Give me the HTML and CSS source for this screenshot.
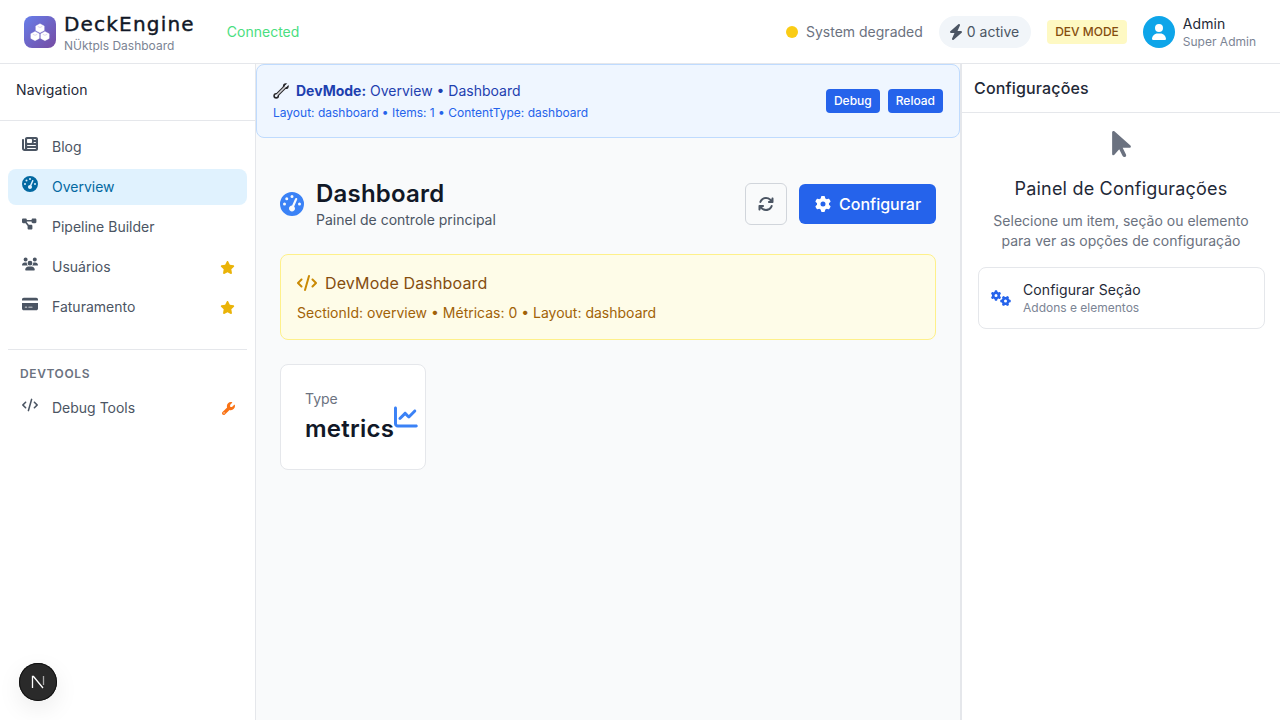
FILE: index.html
```html
<!DOCTYPE html>
<html lang="en">
  <head>
    <meta charset="UTF-8" />
    <meta name="viewport" content="width=device-width, initial-scale=1.0" />
    <title>DeckEngine Dashboard</title>
    <link rel="stylesheet" href="styles.css">
  </head>
  <body>
    <header class="topbar">
      <div class="brand">
        <div class="brand-logo">
          <svg viewBox="0 0 24 20" width="22" height="18">
            <path class="cube" d="M12 .8l4.700 2.500v5.100L12 10.900 7.300 8.400V3.300z" />
            <path class="cube" d="M6.500 9.500l4.700 2.500v5.100l-4.700 2.500-4.700-2.500V12z" />
            <path class="cube" d="M17.500 9.500l4.700 2.500v5.100l-4.700 2.500-4.700-2.500V12z" />
            <path class="cube-line" d="M9.500 3.800L12 5l2.500-1.200M4 12.500l2.500 1.200L9 12.500M15 12.500l2.500 1.200 2.500-1.200" />
          </svg>
        </div>
        <div class="brand-text">
          <div class="brand-name">DeckEngine</div>
          <div class="brand-sub">NÜktpls Dashboard</div>
        </div>
      </div>
      <span class="connected">Connected</span>
      <div class="topbar-right">
        <div class="status"><span class="status-dot"></span>System degraded</div>
        <div class="active-pill">
          <svg class="ico-bolt" viewBox="0 0 448 512"><path d="M349.400 44.600c5.900-13.700 1.500-29.700-10.600-38.500s-28.600-8-39.900 1.800l-256 224c-10 8.800-13.600 22.900-8.900 35.300S50.700 288 64 288H175.500L98.600 467.400c-5.900 13.700-1.500 29.700 10.600 38.500s28.600 8 39.900-1.800l256-224c10-8.800 13.600-22.900 8.900-35.300s-16.600-20.700-30-20.700H272.500L349.400 44.600z" /></svg>
          0 active
        </div>
        <div class="dev-badge">DEV MODE</div>
        <div class="user">
          <div class="avatar">
            <svg viewBox="0 0 448 512" width="14" height="16"><path d="M224 256A128 128 0 1 0 224 0a128 128 0 1 0 0 256zm-45.700 48C79.800 304 0 383.800 0 482.300C0 498.700 13.300 512 29.700 512H418.300c16.400 0 29.700-13.300 29.700-29.700C448 383.800 368.200 304 269.700 304H178.300z" /></svg>
          </div>
          <div class="user-text">
            <div class="user-name">Admin</div>
            <div class="user-role">Super Admin</div>
          </div>
        </div>
      </div>
    </header>

    <div class="layout">
      <aside class="sidebar">
        <div class="sidebar-title">Navigation</div>
        <nav class="nav">
          <a class="nav-item">
            <svg class="nav-icon" viewBox="0 0 512 512"><path d="M96 96c0-35.300 28.700-64 64-64H448c35.300 0 64 28.700 64 64V416c0 35.300-28.700 64-64 64H80c-44.200 0-80-35.800-80-80V128c0-17.700 14.300-32 32-32s32 14.300 32 32V400c0 8.800 7.200 16 16 16s16-7.200 16-16V96zm64 24v80c0 13.300 10.700 24 24 24H296c13.300 0 24-10.700 24-24V120c0-13.300-10.700-24-24-24H184c-13.300 0-24 10.700-24 24zm208-8c0 8.800 7.200 16 16 16h48c8.800 0 16-7.200 16-16s-7.200-16-16-16H384c-8.800 0-16 7.200-16 16zm0 96c0 8.800 7.200 16 16 16h48c8.800 0 16-7.200 16-16s-7.200-16-16-16H384c-8.800 0-16 7.200-16 16zM160 304c0 8.800 7.200 16 16 16H432c8.800 0 16-7.200 16-16s-7.200-16-16-16H176c-8.800 0-16 7.200-16 16zm0 96c0 8.800 7.200 16 16 16H432c8.800 0 16-7.200 16-16s-7.200-16-16-16H176c-8.800 0-16 7.200-16 16z" /></svg>
            Blog
          </a>
          <a class="nav-item active">
            <svg class="nav-icon" viewBox="0 0 512 512"><path d="M0 256a256 256 0 1 1 512 0A256 256 0 1 1 0 256zM288 96a32 32 0 1 0-64 0 32 32 0 1 0 64 0zM256 416c35.300 0 64-28.700 64-64c0-17.400-6.900-33.100-18.100-44.600L366 161.700c5.300-12.100-.2-26.300-12.300-31.600s-26.300.2-31.600 12.300L257.900 288c-.6 0-1.300 0-1.900 0c-35.300 0-64 28.700-64 64s28.700 64 64 64zM176 144a32 32 0 1 0-64 0 32 32 0 1 0 64 0zM96 288a32 32 0 1 0 0-64 32 32 0 1 0 0 64zm352-32a32 32 0 1 0-64 0 32 32 0 1 0 64 0z" /></svg>
            Overview
          </a>
          <a class="nav-item">
            <svg class="nav-icon" viewBox="0 0 640 512"><path d="M0 80C0 53.500 21.500 32 48 32h96c26.500 0 48 21.500 48 48V96H384V80c0-26.500 21.500-48 48-48h96c26.500 0 48 21.500 48 48v96c0 26.500-21.500 48-48 48H432c-26.500 0-48-21.500-48-48V160H192v16c0 1.700-.1 3.400-.3 5L272 288h96c26.500 0 48 21.500 48 48v96c0 26.500-21.500 48-48 48H272c-26.500 0-48-21.500-48-48V336c0-1.700.1-3.400.3-5L144 224H48c-26.500 0-48-21.500-48-48V80z" /></svg>
            Pipeline Builder
          </a>
          <a class="nav-item">
            <svg class="nav-icon" viewBox="0 0 640 512"><path d="M144 0a80 80 0 1 1 0 160A80 80 0 1 1 144 0zM512 0a80 80 0 1 1 0 160A80 80 0 1 1 512 0zM0 298.700C0 239.800 47.800 192 106.700 192h42.700c15.900 0 31 3.500 44.600 9.700c-1.300 7.200-1.900 14.700-1.900 22.300c0 38.200 16.800 72.500 43.300 96c-.2 0-.4 0-.7 0H21.300C9.600 320 0 310.400 0 298.700zM405.300 320c-.2 0-.4 0-.7 0c26.600-23.500 43.300-57.800 43.300-96c0-7.600-.7-15-1.900-22.300c13.600-6.300 28.700-9.700 44.600-9.700h42.700C592.200 192 640 239.800 640 298.700c0 11.800-9.600 21.300-21.300 21.300H405.300zM224 224a96 96 0 1 1 192 0 96 96 0 1 1-192 0zM128 485.300C128 411.700 187.700 352 261.300 352H378.700C452.300 352 512 411.700 512 485.300c0 14.700-11.900 26.700-26.700 26.700H154.700c-14.700 0-26.700-11.900-26.700-26.700z" /></svg>
            Usuários
            <svg class="nav-star" viewBox="0 0 576 512"><path d="M316.900 18C311.600 7 300.400 0 288.100 0s-23.400 7-28.800 18L195 150.300 51.400 171.500c-12 1.800-22 10.200-25.700 21.700s-.7 24.200 7.900 32.700L137.800 329 113.200 474.700c-2 12 3 24.200 12.900 31.300s23 8 33.800 2.300l128.300-68.500 128.300 68.500c10.800 5.700 23.900 4.900 33.800-2.300s14.900-19.300 12.900-31.300L438.500 329 542.700 225.900c8.600-8.500 11.700-21.200 7.900-32.700s-13.700-19.900-25.700-21.700L381.200 150.300 316.900 18z" /></svg>
          </a>
          <a class="nav-item">
            <svg class="nav-icon" viewBox="0 0 576 512"><path d="M64 32C28.700 32 0 60.700 0 96v32H576V96c0-35.300-28.700-64-64-64H64zM576 224H0V416c0 35.300 28.700 64 64 64H512c35.300 0 64-28.700 64-64V224zM112 352h64c8.800 0 16 7.200 16 16s-7.200 16-16 16H112c-8.800 0-16-7.200-16-16s7.200-16 16-16zm112 16c0-8.800 7.200-16 16-16H368c8.800 0 16 7.200 16 16s-7.200 16-16 16H240c-8.800 0-16-7.200-16-16z" /></svg>
            Faturamento
            <svg class="nav-star" viewBox="0 0 576 512"><path d="M316.900 18C311.600 7 300.400 0 288.100 0s-23.400 7-28.800 18L195 150.300 51.400 171.500c-12 1.800-22 10.200-25.700 21.700s-.7 24.200 7.900 32.700L137.800 329 113.200 474.700c-2 12 3 24.200 12.900 31.300s23 8 33.800 2.300l128.300-68.500 128.300 68.500c10.800 5.700 23.900 4.900 33.800-2.300s14.900-19.300 12.900-31.300L438.500 329 542.700 225.900c8.600-8.500 11.700-21.200 7.900-32.700s-13.700-19.900-25.700-21.700L381.200 150.300 316.900 18z" /></svg>
          </a>
        </nav>
        <div class="nav-section">
          <div class="nav-section-title">DEVTOOLS</div>
          <a class="nav-item">
            <svg class="nav-icon" viewBox="0 0 640 512"><path d="M392.800 1.200c-17-4.900-34.700 5-39.600 22l-128 448c-4.900 17 5 34.700 22 39.600s34.700-5 39.600-22l128-448c4.900-17-5-34.700-22-39.600zm80.600 120.100c-12.500 12.500-12.500 32.800 0 45.300L562.700 256l-89.400 89.400c-12.500 12.500-12.500 32.800 0 45.300s32.800 12.500 45.300 0l112-112c12.500-12.500 12.500-32.800 0-45.300l-112-112c-12.500-12.500-32.800-12.500-45.300 0zm-306.700 0c-12.500-12.500-32.800-12.500-45.300 0l-112 112c-12.500 12.500-12.500 32.800 0 45.300l112 112c12.500 12.500 32.800 12.500 45.300 0s12.500-32.800 0-45.300L77.300 256l89.400-89.400c12.500-12.500 12.500-32.800 0-45.300z" /></svg>
            Debug Tools
            <svg class="nav-wrench" viewBox="0 0 512 512"><path d="M352 320c88.400 0 160-71.600 160-160c0-15.300-2.200-30.100-6.200-44.200c-3.100-10.800-16.400-13.200-24.300-5.300l-76.800 76.800c-3 3-7.100 4.700-11.300 4.700H336c-8.800 0-16-7.200-16-16V118.600c0-4.200 1.700-8.300 4.700-11.300l76.800-76.800c7.900-7.900 5.400-21.200-5.300-24.300C382.100 2.200 367.300 0 352 0C263.600 0 192 71.600 192 160c0 19.100 3.400 37.500 9.500 54.500L19.900 396.100C7.200 408.800 0 426.100 0 444.100C0 481.600 30.400 512 67.900 512c18 0 35.300-7.200 48-19.900L297.500 310.500c17 6.200 35.400 9.500 54.500 9.500zM80 408a24 24 0 1 1 0 48 24 24 0 1 1 0-48z" /></svg>
          </a>
        </div>
      </aside>

      <main class="main">
        <div class="dev-banner">
          <div>
            <div class="dev-banner-title">
              <svg viewBox="0 0 16 16" width="16" height="16">
                <path class="wrench-outer" d="M3.200 12.800l9.600-9.600" />
                <circle class="wrench-end" cx="3.200" cy="12.800" r="2.900" />
                <circle class="wrench-end" cx="12.800" cy="3.200" r="2.900" />
                <path class="wrench-inner" d="M3.200 12.800l9.600-9.600" />
                <circle class="wrench-hole" cx="3.200" cy="12.800" r="1.300" />
                <path class="wrench-jaw" d="M13 3l2.700-2.700" />
              </svg>
              <span><strong>DevMode:</strong> Overview • Dashboard</span>
            </div>
            <div class="dev-banner-sub">Layout: dashboard • Items: 1 • ContentType: dashboard</div>
          </div>
          <div class="dev-banner-actions">
            <button class="mini-btn">Debug</button>
            <button class="mini-btn">Reload</button>
          </div>
        </div>

        <div class="content">
          <div class="page-head">
            <svg class="page-icon" viewBox="0 0 512 512"><path d="M0 256a256 256 0 1 1 512 0A256 256 0 1 1 0 256zM288 96a32 32 0 1 0-64 0 32 32 0 1 0 64 0zM256 416c35.300 0 64-28.700 64-64c0-17.400-6.900-33.100-18.100-44.600L366 161.700c5.300-12.100-.2-26.300-12.300-31.600s-26.300.2-31.600 12.300L257.900 288c-.6 0-1.300 0-1.900 0c-35.300 0-64 28.700-64 64s28.700 64 64 64zM176 144a32 32 0 1 0-64 0 32 32 0 1 0 64 0zM96 288a32 32 0 1 0 0-64 32 32 0 1 0 0 64zm352-32a32 32 0 1 0-64 0 32 32 0 1 0 64 0z" /></svg>
            <div class="page-title-wrap">
              <h1>Dashboard</h1>
              <p>Painel de controle principal</p>
            </div>
            <button class="refresh-btn">
              <svg viewBox="0 0 512 512" width="16" height="16"><path d="M105.100 202.600c7.700-21.800 20.200-42.300 37.800-59.800c62.500-62.500 163.800-62.500 226.300 0L386.300 160H352c-17.700 0-32 14.300-32 32s14.300 32 32 32H463.500c0 0 0 0 0 0h.4c17.700 0 32-14.300 32-32V80c0-17.700-14.300-32-32-32s-32 14.300-32 32v35.200L414.400 97.600c-87.500-87.500-229.300-87.500-316.800 0C73.200 122 55.600 150.700 44.800 181.400c-5.900 16.700 2.900 34.900 19.500 40.800s34.900-2.900 40.800-19.500zM39 289.300c-5 1.500-9.800 4.200-13.700 8.200c-4 4-6.700 8.800-8.100 14c-.3 1.200-.6 2.500-.8 3.800c-.3 1.700-.4 3.400-.4 5.100V432c0 17.700 14.300 32 32 32s32-14.300 32-32V396.900l17.600 17.500 0 0c87.500 87.400 229.300 87.400 316.700 0c24.400-24.400 42.100-53.100 52.900-83.700c5.900-16.700-2.900-34.900-19.500-40.800s-34.900 2.900-40.800 19.500c-7.700 21.800-20.200 42.300-37.800 59.800c-62.500 62.500-163.800 62.500-226.300 0l-.1-.1L125.600 352H160c17.700 0 32-14.300 32-32s-14.300-32-32-32H48.400c-1.600 0-3.200.1-4.800.3s-3.100.5-4.600 1z" /></svg>
            </button>
            <button class="primary-btn">
              <svg viewBox="0 0 512 512" width="16" height="16"><path d="M495.900 166.600c3.200 8.700.5 18.400-6.400 24.600l-43.300 39.400c1.100 8.300 1.700 16.800 1.700 25.400s-.6 17.100-1.700 25.400l43.300 39.400c6.900 6.200 9.600 15.900 6.400 24.600c-4.400 11.900-9.700 23.300-15.800 34.300l-4.700 8.100c-6.600 11-14 21.400-22.100 31.200c-5.900 7.200-15.700 9.600-24.500 6.800l-55.700-17.700c-13.400 10.300-28.200 18.900-44 25.400l-12.500 57.100c-2 9.100-9 16.300-18.200 17.800c-13.800 2.300-28 3.500-42.500 3.500s-28.700-1.200-42.500-3.500c-9.200-1.500-16.200-8.700-18.200-17.800l-12.500-57.100c-15.800-6.500-30.600-15.100-44-25.400L83.100 425.900c-8.800 2.800-18.600.3-24.500-6.800c-8.100-9.800-15.500-20.200-22.100-31.200l-4.700-8.100c-6.100-11-11.400-22.400-15.800-34.300c-3.200-8.700-.5-18.400 6.400-24.600l43.300-39.400C64.600 273.100 64 264.600 64 256s.6-17.100 1.700-25.400L22.400 191.200c-6.900-6.200-9.600-15.900-6.400-24.600c4.400-11.900 9.700-23.300 15.800-34.300l4.700-8.100c6.600-11 14-21.400 22.100-31.200c5.900-7.200 15.700-9.600 24.500-6.800l55.700 17.700c13.400-10.300 28.200-18.900 44-25.400l12.500-57.100c2-9.100 9-16.300 18.200-17.800C227.300 1.200 241.500 0 256 0s28.700 1.200 42.500 3.500c9.200 1.500 16.200 8.700 18.200 17.800l12.500 57.100c15.800 6.500 30.600 15.100 44 25.400l55.700-17.700c8.800-2.800 18.600-.3 24.500 6.800c8.100 9.800 15.500 20.200 22.100 31.200l4.700 8.100c6.100 11 11.400 22.400 15.800 34.300zM256 336a80 80 0 1 0 0-160 80 80 0 1 0 0 160z" /></svg>
              Configurar
            </button>
          </div>

          <div class="callout">
            <div class="callout-title">
              <svg viewBox="0 0 640 512" width="20" height="16"><path d="M392.800 1.200c-17-4.900-34.700 5-39.600 22l-128 448c-4.900 17 5 34.700 22 39.600s34.700-5 39.600-22l128-448c4.900-17-5-34.700-22-39.600zm80.600 120.100c-12.500 12.500-12.500 32.800 0 45.300L562.700 256l-89.400 89.400c-12.500 12.500-12.500 32.800 0 45.300s32.800 12.500 45.300 0l112-112c12.500-12.500 12.500-32.800 0-45.300l-112-112c-12.500-12.500-32.800-12.500-45.300 0zm-306.700 0c-12.500-12.500-32.800-12.500-45.300 0l-112 112c-12.500 12.500-12.500 32.800 0 45.300l112 112c12.500 12.500 32.800 12.500 45.300 0s12.500-32.800 0-45.300L77.300 256l89.400-89.400c12.500-12.500 12.500-32.800 0-45.300z" /></svg>
              DevMode Dashboard
            </div>
            <div class="callout-sub">SectionId: overview • Métricas: 0 • Layout: dashboard</div>
          </div>

          <div class="metric-card">
            <div>
              <div class="metric-label">Type</div>
              <div class="metric-value">metrics</div>
            </div>
            <svg class="metric-icon" viewBox="0 0 512 512"><path d="M64 64c0-17.700-14.300-32-32-32S0 46.300 0 64V400c0 44.200 35.800 80 80 80H480c17.700 0 32-14.300 32-32s-14.300-32-32-32H80c-8.800 0-16-7.200-16-16V64zm406.600 86.600c12.500-12.500 12.500-32.800 0-45.300s-32.800-12.500-45.300 0L320 210.700l-57.400-57.400c-12.500-12.500-32.800-12.500-45.300 0l-112 112c-12.500 12.500-12.500 32.800 0 45.300s32.800 12.500 45.300 0L240 221.300l57.400 57.400c12.500 12.500 32.800 12.500 45.300 0l128-128z" /></svg>
          </div>
        </div>
      </main>

      <aside class="config">
        <div class="config-head">Configurações</div>
        <div class="config-body">
          <svg class="config-cursor" viewBox="0 0 320 512"><path d="M0 55.200V426c0 12.200 9.900 22 22 22c6.300 0 12.400-2.700 16.600-7.500L121.200 346l58.100 116.300c7.900 15.800 27.100 22.200 42.900 14.300s22.200-27.100 14.300-42.900L179.800 320H297.900c12.200 0 22.100-9.900 22.100-22.100c0-6.300-2.700-12.300-7.400-16.500L38.600 37.900C34.300 34.100 28.900 32 23.200 32C10.400 32 0 42.400 0 55.200z" /></svg>
          <h3>Painel de Configurações</h3>
          <p>Selecione um item, seção ou elemento<br>para ver as opções de configuração</p>
          <div class="config-card">
            <svg viewBox="0 0 640 512" width="20" height="16"><path d="M308.500 135.300c7.100-6.300 9.900-16.200 6.200-25c-2.300-5.300-4.800-10.500-7.600-15.500L304 89.400c-3-5-6.300-9.900-9.800-14.600c-5.700-7.600-15.700-10.100-24.700-7.100l-28.200 9.300c-10.700-8.800-23-16-36.200-20.900L199 27.100c-1.900-9.300-9.100-16.700-18.500-17.800C173.900 8.400 167.200 8 160.400 8h-.7c-6.800 0-13.500.4-20.100 1.200c-9.400 1.100-16.600 8.600-18.500 17.800L115 56.100c-13.300 5-25.500 12.100-36.200 20.900L50.500 67.800c-9-3-19-.5-24.700 7.100c-3.500 4.700-6.800 9.600-9.900 14.600l-3 5.300c-2.800 5-5.300 10.200-7.600 15.600c-3.700 8.700-.9 18.600 6.200 25l22.200 19.800C32.600 161.900 32 168.900 32 176s.6 14.100 1.700 20.900L11.500 216.700c-7.100 6.300-9.900 16.200-6.200 25c2.300 5.300 4.800 10.500 7.600 15.600l3 5.200c3 5.100 6.300 9.900 9.900 14.600c5.700 7.600 15.700 10.100 24.700 7.100l28.200-9.300c10.700 8.800 23 16 36.200 20.900l6.100 29.100c1.900 9.300 9.100 16.700 18.500 17.800c6.700.8 13.500 1.200 20.400 1.200s13.700-.4 20.400-1.200c9.400-1.100 16.600-8.600 18.500-17.800l6.100-29.100c13.300-5 25.500-12.100 36.200-20.900l28.200 9.300c9 3 19 .5 24.700-7.100c3.500-4.700 6.800-9.500 9.800-14.600l3.100-5.400c2.800-5 5.300-10.200 7.600-15.500c3.700-8.700.9-18.600-6.200-25l-22.200-19.800c1.100-6.800 1.700-13.800 1.700-20.900s-.6-14.100-1.700-20.900l22.200-19.800zM112 176a48 48 0 1 1 96 0 48 48 0 1 1-96 0zM504.700 500.500c6.300 7.100 16.200 9.900 25 6.200c5.300-2.300 10.500-4.800 15.500-7.600l5.400-3.100c5-3 9.900-6.300 14.600-9.800c7.600-5.700 10.100-15.700 7.100-24.700l-9.300-28.200c8.800-10.700 16-23 20.900-36.200l29.100-6.100c9.300-1.900 16.700-9.100 17.800-18.500c.8-6.700 1.200-13.500 1.200-20.400s-.4-13.700-1.200-20.400c-1.100-9.400-8.600-16.600-17.800-18.500L583.900 307c-5-13.300-12.100-25.500-20.900-36.200l9.300-28.200c3-9 .5-19-7.100-24.700c-4.700-3.500-9.600-6.800-14.600-9.900l-5.300-3c-5-2.800-10.200-5.300-15.600-7.600c-8.700-3.700-18.600-.9-25 6.200l-19.800 22.200c-6.800-1.100-13.800-1.700-20.900-1.700s-14.100.6-20.900 1.700l-19.800-22.200c-6.300-7.100-16.200-9.900-25-6.200c-5.300 2.300-10.500 4.800-15.600 7.600l-5.200 3c-5.100 3-9.900 6.300-14.600 9.900c-7.600 5.700-10.100 15.700-7.100 24.700l9.300 28.200c-8.800 10.700-16 23-20.900 36.200L315.100 313c-9.300 1.900-16.700 9.100-17.800 18.500c-.8 6.700-1.200 13.500-1.200 20.400s.4 13.700 1.200 20.400c1.100 9.400 8.600 16.600 17.800 18.500l29.100 6.100c5 13.300 12.100 25.500 20.900 36.200l-9.300 28.200c-3 9-.5 19 7.100 24.700c4.700 3.500 9.500 6.800 14.600 9.800l5.400 3.100c5 2.800 10.200 5.300 15.500 7.600c8.700 3.700 18.600.9 25-6.200l19.800-22.200c6.800 1.100 13.800 1.700 20.900 1.700s14.100-.6 20.900-1.700l19.800 22.200zM464 304a48 48 0 1 1 0 96 48 48 0 1 1 0-96z" /></svg>
            <div>
              <div class="config-card-title">Configurar Seção</div>
              <div class="config-card-sub">Addons e elementos</div>
            </div>
          </div>
        </div>
      </aside>
    </div>

    <button class="next-badge">
      <svg viewBox="0 0 16 16" width="16" height="16">
        <path class="next-n" d="M2.500 14V2.500h1L13 14" />
        <path class="next-n next-n-faded" d="M13.500 2v9" />
      </svg>
    </button>
  </body>
</html>
```

FILE: styles.css
```css
* {
  box-sizing: border-box;
}

body {
  font-family: "Inter", "Liberation Sans", sans-serif;
  background-color: #ffffff;
  color: #111827;
  margin: 0;
  height: 100vh;
  display: flex;
  flex-direction: column;
  overflow: hidden;
}

button {
  font-family: inherit;
  border: none;
  cursor: pointer;
}

h1,
h3,
p {
  margin: 0;
}

/* top bar */
.topbar {
  height: 64px;
  flex-shrink: 0;
  display: flex;
  align-items: center;
  padding: 0 24px;
  background-color: #ffffff;
  border-bottom: 1px solid #e5e7eb;
}

.brand {
  display: flex;
  align-items: center;
  gap: 8px;
}

.brand-logo {
  width: 32px;
  height: 32px;
  border-radius: 8px;
  background: linear-gradient(135deg, #667eea, #764ba2);
  display: flex;
  align-items: center;
  justify-content: center;
}

.cube {
  fill: #ffffff;
  stroke: #ffffff;
  stroke-width: 0.4;
  stroke-linejoin: round;
}

.cube-line {
  fill: none;
  stroke: #c9bde0;
  stroke-width: 0.7;
}

.brand-text {
  padding-top: 2px;
}

.brand-name {
  font-family: "DejaVu Sans", sans-serif;
  font-size: 20px;
  line-height: 24px;
  letter-spacing: 1.2px;
  color: #111827;
  -webkit-text-stroke: 0.4px #111827;
}

.brand-sub {
  margin-top: 2px;
  font-size: 12px;
  line-height: 16px;
  color: #7b8494;
}

.connected {
  margin-left: 32px;
  font-size: 14px;
  color: #4ade80;
}

.topbar-right {
  margin-left: auto;
  display: flex;
  align-items: center;
  gap: 16px;
}

.status {
  display: flex;
  align-items: center;
  gap: 8px;
  font-size: 14px;
  color: #6b7280;
}

.status-dot {
  width: 12px;
  height: 12px;
  border-radius: 50%;
  background-color: #facc15;
}

.active-pill {
  height: 32px;
  padding: 0 12px;
  display: flex;
  align-items: center;
  gap: 4px;
  border-radius: 16px;
  background-color: #f1f5f9;
  font-size: 14px;
  color: #4b5563;
}

.ico-bolt {
  width: 14px;
  height: 16px;
  margin-left: -2px;
  fill: #4b5563;
}

.dev-badge {
  padding: 4px 8px;
  border-radius: 4px;
  background-color: #fef9c3;
  color: #854d0e;
  font-size: 12px;
  font-weight: 500;
  line-height: 16px;
}

.user {
  display: flex;
  align-items: center;
  gap: 8px;
}

.avatar {
  width: 32px;
  height: 32px;
  border-radius: 50%;
  background-color: #0ea5e9;
  display: flex;
  align-items: center;
  justify-content: center;
  fill: #ffffff;
}

.user-text {
  padding-top: 2px;
}

.user-name {
  font-size: 14px;
  line-height: 18px;
  letter-spacing: 0.1px;
  color: #1f2937;
}

.user-role {
  margin-top: 1px;
  font-size: 12px;
  line-height: 16px;
  color: #7b8494;
}

/* page columns */
.layout {
  flex: 1;
  display: flex;
  min-height: 0;
}

.sidebar {
  width: 256px;
  flex-shrink: 0;
  background-color: #ffffff;
  border-right: 1px solid #e5e7eb;
}

.sidebar-title {
  height: 57px;
  padding: 0 16px 6px;
  display: flex;
  align-items: center;
  border-bottom: 1px solid #e5e7eb;
  font-size: 14px;
  letter-spacing: 0.1px;
  color: #1f2937;
}

.nav {
  padding: 8px 8px 24px;
  display: flex;
  flex-direction: column;
  gap: 4px;
}

.nav-item {
  height: 36px;
  padding: 0 12px 2px 14px;
  display: flex;
  align-items: center;
  border-radius: 8px;
  font-size: 14px;
  color: #4b5563;
}

.nav-item.active {
  background-color: #e0f2fe;
  color: #0369a1;
}

.nav-icon {
  width: 16px;
  height: 16px;
  margin-right: 14px;
  margin-top: -5px;
  fill: currentColor;
}

.nav-star {
  width: 15px;
  height: 13px;
  margin-left: auto;
  margin-top: 2px;
  fill: #eab308;
}

.nav-wrench {
  width: 13px;
  height: 13px;
  margin-left: auto;
  margin-top: 2px;
  fill: #f97316;
}

.nav-section {
  margin: 0 8px;
  padding-top: 16px;
  border-top: 1px solid #e5e7eb;
}

.nav-section-title {
  padding: 0 12px;
  font-size: 12px;
  font-weight: 600;
  line-height: 16px;
  letter-spacing: 0.6px;
  color: #6b7280;
}

.nav-section .nav-item {
  margin-top: 8px;
}

/* main column */
.main {
  flex: 1;
  min-width: 0;
  background-color: #f9fafb;
}

.dev-banner {
  height: 74px;
  padding: 0 16px;
  display: flex;
  align-items: center;
  justify-content: space-between;
  background-color: #eff6ff;
  border: 1px solid #bfdbfe;
  border-radius: 8px;
}

.dev-banner-title {
  display: flex;
  align-items: center;
  gap: 7px;
  font-size: 14px;
  line-height: 20px;
  color: #1e40af;
}

.wrench-outer,
.wrench-inner,
.wrench-jaw {
  fill: none;
  stroke-linecap: round;
}

.wrench-outer {
  stroke: #27272a;
  stroke-width: 3.600;
}

.wrench-end {
  fill: #27272a;
}

.wrench-inner {
  stroke: #d4d4d8;
  stroke-width: 1.600;
}

.wrench-hole {
  fill: #eff6ff;
}

.wrench-jaw {
  stroke: #eff6ff;
  stroke-width: 2;
}

.dev-banner-sub {
  margin-top: 4px;
  font-size: 12px;
  line-height: 16px;
  color: #2563eb;
}

.dev-banner-actions {
  display: flex;
  gap: 8px;
}

.mini-btn {
  height: 24px;
  padding: 0 8px 2px;
  border-radius: 4px;
  background-color: #2563eb;
  color: #ffffff;
  font-size: 12px;
  font-weight: 500;
}

.content {
  padding: 40px 24px 24px;
}

.page-head {
  display: flex;
  align-items: center;
  margin-bottom: 24px;
}

.page-icon {
  width: 24px;
  height: 24px;
  margin-right: 12px;
  fill: #3b82f6;
}

.page-title-wrap {
  flex: 1;
}

.page-title-wrap h1 {
  font-size: 24px;
  font-weight: 600;
  line-height: 32px;
  letter-spacing: 0.2px;
  color: #111827;
}

.page-title-wrap p {
  font-size: 14px;
  line-height: 20px;
  color: #4b5563;
}

.refresh-btn {
  width: 42px;
  height: 42px;
  margin-right: 12px;
  display: flex;
  align-items: center;
  justify-content: center;
  background-color: #f9fafb;
  border: 1px solid #d1d5db;
  border-radius: 6px;
  fill: #4b5563;
}

.primary-btn {
  width: 137px;
  height: 40px;
  padding: 0 0 0 16px;
  display: flex;
  align-items: center;
  gap: 8px;
  background-color: #2563eb;
  border-radius: 6px;
  color: #ffffff;
  font-size: 16px;
  font-weight: 500;
  fill: #ffffff;
}

.callout {
  padding: 16px;
  background-color: #fefce8;
  border: 1px solid #fef08a;
  border-radius: 8px;
  margin-bottom: 24px;
}

.callout-title {
  display: flex;
  align-items: center;
  gap: 8px;
  font-size: 16px;
  line-height: 24px;
  letter-spacing: 0.15px;
  color: #854d0e;
  fill: #ca8a04;
}

.callout-sub {
  margin-top: 8px;
  font-size: 14px;
  line-height: 20px;
  color: #a16207;
}

.metric-card {
  width: 146px;
  height: 106px;
  padding: 24px 7px 0 24px;
  display: flex;
  justify-content: space-between;
  align-items: flex-start;
  background-color: #ffffff;
  border: 1px solid #e5e7eb;
  border-radius: 8px;
}

.metric-label {
  font-size: 14px;
  line-height: 20px;
  color: #6b7280;
}

.metric-value {
  margin-top: 4px;
  font-size: 24px;
  font-weight: 600;
  line-height: 32px;
  letter-spacing: 0.25px;
  color: #111827;
}

.metric-icon {
  width: 24px;
  height: 24px;
  margin-top: 16px;
  fill: #3b82f6;
}

/* right panel */
.config {
  width: 320px;
  flex-shrink: 0;
  background-color: #ffffff;
  border-left: 2px solid #e5e7eb;
}

.config-head {
  height: 49px;
  padding: 0 12px;
  display: flex;
  align-items: center;
  border-bottom: 1px solid #e5e7eb;
  font-size: 16px;
  font-weight: 500;
  letter-spacing: 0.15px;
  color: #1f2937;
}

.config-body {
  padding: 16px;
  text-align: center;
}

.config-cursor {
  display: block;
  width: 19px;
  height: 30px;
  margin: 0 auto;
  fill: #6b7280;
}

.config-body h3 {
  margin-top: 16px;
  font-size: 18px;
  font-weight: 400;
  line-height: 28px;
  letter-spacing: 0.2px;
  color: #1f2937;
}

.config-body p {
  margin-top: 8px;
  font-size: 14px;
  line-height: 20px;
  color: #6b7280;
}

.config-card {
  margin-top: 16px;
  margin-right: -1px;
  height: 62px;
  padding: 0 12px;
  display: flex;
  align-items: center;
  gap: 12px;
  text-align: left;
  border: 1px solid #e5e7eb;
  border-radius: 8px;
  fill: #2563eb;
}

.config-card-title {
  font-size: 14px;
  line-height: 20px;
  letter-spacing: 0.1px;
  color: #1f2937;
}

.config-card-sub {
  font-size: 12px;
  line-height: 16px;
  color: #7b8494;
}

/* floating dev indicator */
.next-badge {
  position: fixed;
  left: 19px;
  bottom: 19px;
  width: 38px;
  height: 38px;
  padding: 0;
  display: flex;
  align-items: center;
  justify-content: center;
  border-radius: 50%;
  background-color: #2a2a2a;
  box-shadow: inset 0 0 0 1px #111111, 0 8px 24px rgba(0, 0, 0, 0.08);
}

.next-n {
  fill: none;
  stroke: #ffffff;
  stroke-width: 1.300;
}

.next-n-faded {
  opacity: 0.6;
}
```
